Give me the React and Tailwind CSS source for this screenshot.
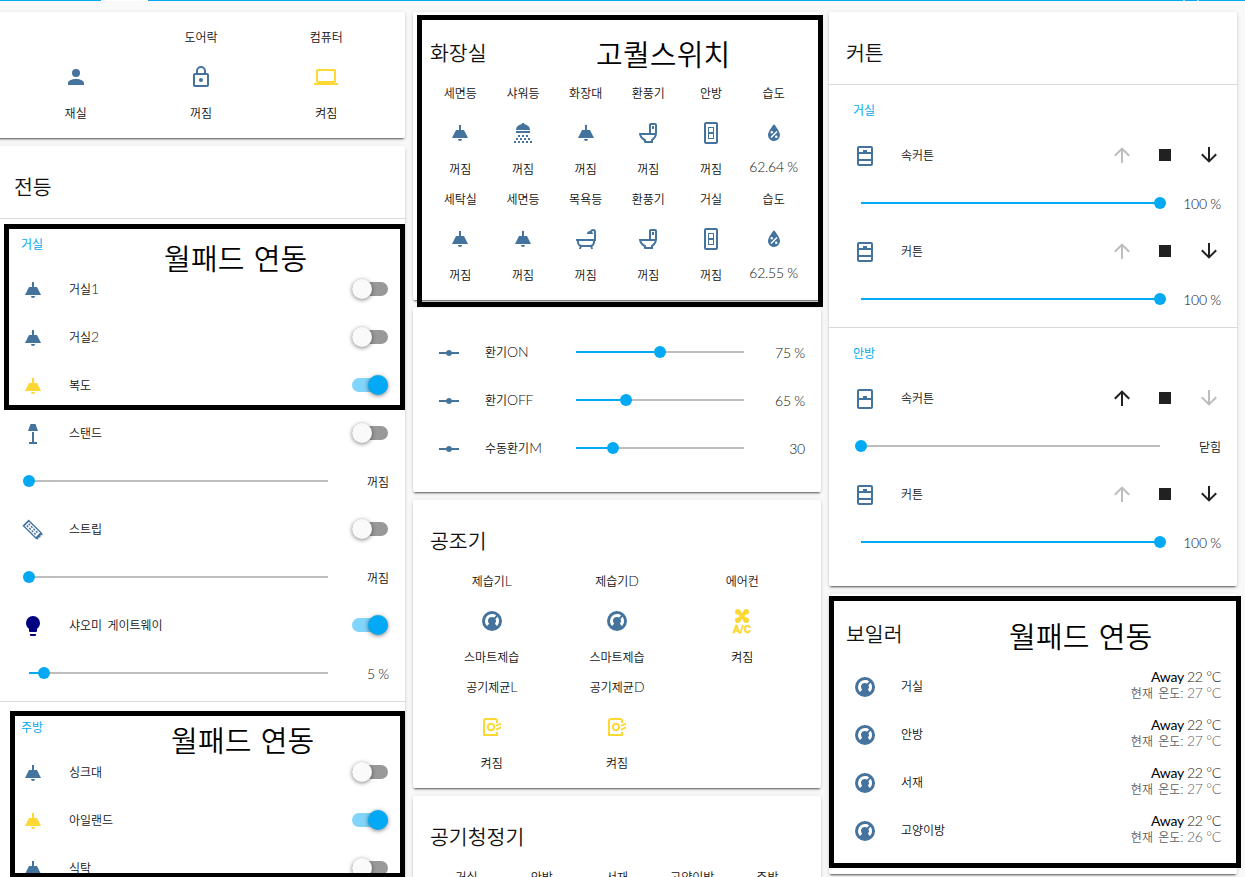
import React from "react";

const BLUE = "#44739e";
const YELLOW = "#fdd835";

const PATHS = {
  account:
    "M12,4A4,4 0 0,1 16,8A4,4 0 0,1 12,12A4,4 0 0,1 8,8A4,4 0 0,1 12,4M12,14C16.42,14 20,15.79 20,18V20H4V18C4,15.79 7.58,14 12,14Z",
  lock: "M12,17C10.89,17 10,16.1 10,15C10,13.89 10.89,13 12,13A2,2 0 0,1 14,15A2,2 0 0,1 12,17M18,20V10H6V20H18M18,8A2,2 0 0,1 20,10V20A2,2 0 0,1 18,22H6C4.89,22 4,21.1 4,20V10C4,8.89 4.89,8 6,8H7V6A5,5 0 0,1 12,1A5,5 0 0,1 17,6V8H18M12,3A3,3 0 0,0 9,6V8H15V6A3,3 0 0,0 12,3Z",
  laptop:
    "M4,6H20V16H4M20,18A2,2 0 0,0 22,16V6C22,4.89 21.1,4 20,4H4C2.89,4 2,4.89 2,6V16A2,2 0 0,0 4,18H0V20H24V18H20Z",
  lamp: "M8,9H11V4H13V9H16L20,17H4L8,9M14,18C14,19.1 13.1,20 12,20C10.9,20 10,19.1 10,18H14Z",
  stand: "M9.5,2H14.5L17,9H7ZM11,10H13V20H16V22H8V20H11Z",
  bulb: "M12,2A7,7 0 0,0 5,9C5,11.38 6.19,13.47 8,14.74V17A1,1 0 0,0 9,18H15A1,1 0 0,0 16,17V14.74C17.81,13.47 19,11.38 19,9A7,7 0 0,0 12,2M9,21A1,1 0 0,0 10,22H14A1,1 0 0,0 15,21V20H9V21Z",
  vertex:
    "M2,11H9.17C9.58,9.83 10.69,9 12,9C13.31,9 14.42,9.83 14.83,11H22V13H14.83C14.42,14.17 13.31,15 12,15C10.69,15 9.58,14.17 9.17,13H2V11Z",
  shower:
    "M5,9A7,6 0 0,1 11,3.1V2H13V3.1A7,6 0 0,1 19,9ZM5,10H19V12H5ZM7,14h2v2h-2zM11,14h2v2h-2zM15,14h2v2h-2zM5,17h2v2h-2zM9,17h2v2h-2zM13,17h2v2h-2zM17,17h2v2h-2zM3,20h2v2h-2zM7,20h2v2h-2zM11,20h2v2h-2zM15,20h2v2h-2zM19,20h2v2h-2z",
  toilet:
    "M9,22H17V19.5C19.41,17.87 21,15.12 21,12V4A2,2 0 0,0 19,2H15C13.89,2 13,2.9 13,4V12H3C3,15.09 4.57,18 8,19.7V21A1,1 0 0,0 9,22M5.29,14H18.71C18.14,15.91 16.77,17.53 15,18.41V20H10V18.41C7.73,17.53 5.86,15.91 5.29,14M15,4H19V12H15ZM16,5V8H18V5H16Z",
  switch:
    "M7,1H17A2,2 0 0,1 19,3V21A2,2 0 0,1 17,23H7A2,2 0 0,1 5,21V3A2,2 0 0,1 7,1M7,3V21H17V3ZM9,6H15V18H9ZM10,7V11H14V7ZM10,13V17H14V13Z",
  water:
    "M12,3.25C12,3.25 6,10 6,14C6,17.32 8.69,20 12,20A6,6 0 0,0 18,14C18,10 12,3.25 12,3.25M14.47,9.97L15.53,11.03L9.53,17.03L8.47,15.97ZM9.75,10A1.25,1.25 0 0,1 11,11.25A1.25,1.25 0 0,1 9.75,12.5A1.25,1.25 0 0,1 8.5,11.25A1.25,1.25 0 0,1 9.75,10M14.25,14.5A1.25,1.25 0 0,1 15.5,15.75A1.25,1.25 0 0,1 14.25,17A1.25,1.25 0 0,1 13,15.75A1.25,1.25 0 0,1 14.25,14.5Z",
  bath: "M21,14V15C21,16.91 19.93,18.57 18.35,19.41L19,22H17L16.5,20H7.5L7,22H5L5.65,19.41C4.07,18.57 3,16.91 3,15V14H2V12H20V5A1,1 0 0,0 19,4C18.5,4 18.12,4.34 18,4.79C18.63,5.33 19,6.13 19,7H13A3,3 0 0,1 16,4H16.17C16.58,2.84 17.69,2 19,2A3,3 0 0,1 22,5V14H21M19,14H5V15A3,3 0 0,0 8,18H16A3,3 0 0,0 19,15V14Z",
  gauge:
    "M16.95,16.95L14.83,14.83C15.55,14.1 16,13.1 16,12C16,11.26 15.79,10.57 15.43,10L17.6,7.81C18.5,9 19,10.43 19,12C19,13.93 18.22,15.68 16.95,16.95M12,5C13.57,5 15,5.5 16.19,6.4L14,8.56C13.43,8.21 12.74,8 12,8A4,4 0 0,0 8,12C8,13.1 8.45,14.1 9.17,14.83L7.05,16.95C5.78,15.68 5,13.93 5,12A7,7 0 0,1 12,5M12,2A10,10 0 0,0 2,12A10,10 0 0,0 12,22A10,10 0 0,0 22,12A10,10 0 0,0 12,2Z",
  opened:
    "M6,2H18A2,2 0 0,1 20,4V20A2,2 0 0,1 18,22H6A2,2 0 0,1 4,20V4A2,2 0 0,1 6,2M6,4V8H10V6H14V8H18V4ZM6,10V15H18V10ZM6,17V20H18V17Z",
  closed:
    "M6,2H18A2,2 0 0,1 20,4V20A2,2 0 0,1 18,22H6A2,2 0 0,1 4,20V4A2,2 0 0,1 6,2M6,4V11H10V9H14V11H18V4ZM6,13V20H18V13Z",
  up: "M13,20H11V8L5.5,13.5L4.08,12.08L12,4.16L19.92,12.08L18.5,13.5L13,8V20Z",
  down: "M11,4H13V16L18.5,10.5L19.92,11.92L12,19.84L4.08,11.92L5.5,10.5L11,16V4Z",
  stop: "M18,18H6V6H18V18Z",
};

function Icon({ name, color = BLUE }) {
  let body;
  if (name === "strip") {
    body = (
      <g transform="rotate(45 12 12)">
        <path
          fillRule="evenodd"
          d="M1.5,7.6H20.5L22.5,9L21,10.5L22.5,12L21,13.5L22.5,15L20.5,16.4H1.5ZM3.2,9V15H19V9Z"
        />
        <path d="M4.5,10h2v1.5h-2zM8,10h2v1.5h-2zM11.5,10h2v1.5h-2zM15,10h2v1.5h-2zM4.5,12.5h2v1.5h-2zM8,12.5h2v1.5h-2zM11.5,12.5h2v1.5h-2zM15,12.5h2v1.5h-2z" />
      </g>
    );
  } else if (name === "ac") {
    body = (
      <>
        <path d="M8.5,3L15.5,11M15.5,3L8.5,11" stroke={color} strokeWidth="3.8" />
        <circle cx="7.8" cy="2.8" r="2.8" />
        <circle cx="16.2" cy="2.8" r="2.8" />
        <circle cx="7.8" cy="11.2" r="2.8" />
        <circle cx="16.2" cy="11.2" r="2.8" />
        <text
          x="3"
          y="24"
          textLength="18"
          lengthAdjust="spacingAndGlyphs"
          stroke={color}
          strokeWidth="0.5"
          className="font-['Roboto','Liberation_Sans',sans-serif] text-[10.5px] font-bold"
        >
          A/C
        </text>
      </>
    );
  } else if (name === "purifier") {
    body = (
      <g fill="none" stroke={color} strokeWidth="2">
        <path d="M17,8V6A2,2 0 0,0 15,4H6A2,2 0 0,0 4,6V20H17V17" />
        <circle cx="11" cy="12" r="3.2" />
        <path d="M16,10.8L21,8.6M16,14.6L21,12.4" strokeWidth="1.7" />
      </g>
    );
  } else {
    body = <path fillRule="evenodd" d={PATHS[name]} />;
  }
  return (
    <svg viewBox="0 0 24 24" fill={color} className="size-6 shrink-0 overflow-visible">
      {body}
    </svg>
  );
}

/* Hangul is set smaller than the Latin letters and digits around it. */
function Label({ children, className = "" }) {
  const parts = children.match(/[\uac00-\ud7a3]+( [\uac00-\ud7a3]+)*|[^\uac00-\ud7a3]+/g) || [];
  return (
    <span className={"whitespace-pre " + className}>
      {parts.map((p, i) =>
        /[\uac00-\ud7a3]/.test(p) ? (
          <span key={i} className="text-[12px] [word-spacing:2px]">
            {p}
          </span>
        ) : (
          <span key={i} className="text-[14px] tracking-[-0.25px]">
            {p}
          </span>
        )
      )}
    </span>
  );
}

function Card({ className = "", children }) {
  return (
    <section
      className={
        "shrink-0 rounded-[2px] bg-white shadow-[0_2px_2px_0_rgba(0,0,0,0.16),0_1px_5px_0_rgba(0,0,0,0.12),0_3px_1px_-2px_rgba(0,0,0,0.35)] " +
        className
      }
    >
      {children}
    </section>
  );
}

function Title({ className = "h-[71px] pt-[11px]", children }) {
  return (
    <h2
      className={
        "flex items-center pl-[17px] text-[20.5px] leading-none font-[350] " + className
      }
    >
      {children}
    </h2>
  );
}

function Glance({ items, cols }) {
  return (
    <div className={"grid px-4 " + cols}>
      {items.map(([label, icon, state, color], i) => (
        <div key={i} className="flex h-[106px] flex-col items-center">
          <div className="flex h-5 items-center pb-[3px] leading-none">
            <Label>{label}</Label>
          </div>
          <div className="flex h-[60px] items-center">
            {icon && <Icon name={icon} color={color} />}
          </div>
          <div
            className={
              "flex h-[13px] items-center leading-none " +
              (/\d/.test(state) ? "pb-[7px]" : "pb-[3px]")
            }
          >
            <Label>{state}</Label>
          </div>
        </div>
      ))}
    </div>
  );
}

function Row({ icon, color, label, children }) {
  return (
    <div className="flex h-12 items-center pr-4 pl-6">
      <div className="w-12 shrink-0 pt-0.5">
        <Icon name={icon} color={color} />
      </div>
      <Label className="flex-1 pb-[3px] leading-none">{label}</Label>
      {children}
    </div>
  );
}

function Toggle({ on }) {
  return (
    <div
      className={
        "mr-px flex h-3.5 w-9 items-center rounded-full " +
        (on ? "justify-end bg-[#81d4fa]" : "bg-[#999999]")
      }
    >
      <div
        className={
          "size-5 shrink-0 rounded-full shadow-[0_1px_4px_0_rgba(0,0,0,0.5)] " +
          (on ? "bg-[#03a9f4]" : "bg-[#fafafa]")
        }
      />
    </div>
  );
}

function Slider({ value, className = "" }) {
  return (
    <div className={"flex items-center " + className}>
      <div className="h-0.5 bg-[#03a9f4]" style={{ width: `${value}%` }} />
      <div className="z-10 -mx-1.5 size-3 shrink-0 rounded-full bg-[#03a9f4]" />
      <div className="h-0.5 flex-1 bg-[#bdbdbd]" />
    </div>
  );
}

function SliderRow({ value, text }) {
  return (
    <div className="flex h-12 items-center justify-between pr-4 pl-8">
      <Slider value={value} className="w-[299px]" />
      <Label className="pb-px leading-none">{text}</Label>
    </div>
  );
}

function Section({ children }) {
  return (
    <div className="flex h-[46px] items-center pt-1.5 pl-6 text-[12px] leading-none font-normal text-[#03a9f4]">
      {children}
    </div>
  );
}

function Divider() {
  return <div className="h-px bg-[#dadada]" />;
}

function Cover({ label, closed }) {
  return (
    <Row icon={closed ? "closed" : "opened"} label={label}>
      <div className="flex">
        <Icon name="up" color={closed ? "#212121" : "#bdbdbd"} />
        <div className="mr-5 ml-[19px] flex">
          <Icon name="stop" color="#212121" />
        </div>
        <Icon name="down" color={closed ? "#bdbdbd" : "#212121"} />
      </div>
    </Row>
  );
}

function Climate({ label, now }) {
  return (
    <Row icon="gauge" label={label}>
      <div className="flex flex-col items-end pb-0.5 leading-4">
        <div className="flex h-4 items-center gap-[3px] text-[14px] tracking-[-0.25px]">
          <span className="font-normal text-black">Away</span>
          <span>22 °C</span>
        </div>
        <div className="flex h-4 items-center text-[#606060]">
          <Label>{`현재 온도: ${now} °C`}</Label>
        </div>
      </div>
    </Row>
  );
}

function Frame({ box, note, children }) {
  return (
    <div className={"absolute z-20 border-5 border-black " + box}>
      <div
        className={
          "absolute text-[29px] leading-none font-[350] tracking-[0.2px] whitespace-nowrap text-black [word-spacing:1px] " +
          note
        }
      >
        {children}
      </div>
    </div>
  );
}

const OFF = "꺼짐";
const ON = "켜짐";

export default function App() {
  return (
    <div className="relative h-[877px] w-[1245px] overflow-hidden bg-[#f9f9f9] font-['Lato','Noto_Sans_CJK_KR',sans-serif] font-[350] text-[#111111]">
      <header className="flex h-px bg-[#03a9f4]">
        <div className="ml-[101px] h-px w-[47px] bg-white" />
        <div className="ml-[1035px] h-px w-0.5 bg-[#a5d8f0]" />
        <div className="ml-3 h-px w-0.5 bg-[#a5d8f0]" />
      </header>

      <main className="-ml-[3px] flex gap-2 pt-[11px]">
        <div className="flex w-[408px] shrink-0 flex-col gap-2">
          <Card className="h-[126px] pt-[15px]">
            <Glance
              cols="grid-cols-3"
              items={[
                [" ", "account", "재실"],
                ["도어락", "lock", OFF],
                ["컴퓨터", "laptop", ON, YELLOW],
              ]}
            />
          </Card>
          <Card className="h-[760px]">
            <Title className="h-[72px] pt-2.5">전등</Title>
            <Divider />
            <Section>거실</Section>
            <Row icon="lamp" label="거실1">
              <Toggle />
            </Row>
            <Row icon="lamp" label="거실2">
              <Toggle />
            </Row>
            <Row icon="lamp" color={YELLOW} label="복도">
              <Toggle on />
            </Row>
            <Row icon="stand" label="스탠드">
              <Toggle />
            </Row>
            <SliderRow value={0} text={OFF} />
            <Row icon="strip" label="스트립">
              <Toggle />
            </Row>
            <SliderRow value={0} text={OFF} />
            <Row icon="bulb" color="#000080" label="샤오미 게이트웨이">
              <Toggle on />
            </Row>
            <SliderRow value={5} text="5 %" />
            <div className="h-1" />
            <Divider />
            <Section>주방</Section>
            <Row icon="lamp" label="싱크대">
              <Toggle />
            </Row>
            <Row icon="lamp" color={YELLOW} label="아일랜드">
              <Toggle on />
            </Row>
            <Row icon="lamp" label="식탁">
              <Toggle />
            </Row>
          </Card>
        </div>

        <div className="flex w-[408px] shrink-0 flex-col gap-2">
          <Card className="h-[288px]">
            <Title>화장실</Title>
            <Glance
              cols="grid-cols-6"
              items={[
                ["세면등", "lamp", OFF],
                ["샤워등", "shower", OFF],
                ["화장대", "lamp", OFF],
                ["환풍기", "toilet", OFF],
                ["안방", "switch", OFF],
                ["습도", "water", "62.64 %"],
                ["세탁실", "lamp", OFF],
                ["세면등", "lamp", OFF],
                ["목욕등", "bath", OFF],
                ["환풍기", "toilet", OFF],
                ["거실", "switch", OFF],
                ["습도", "water", "62.55 %"],
              ]}
            />
          </Card>
          <Card className="h-[184px] pt-5">
            <Row icon="vertex" label="환기ON">
              <Slider value={50} className="w-[168px]" />
              <Label className="w-[61px] text-right">75 %</Label>
            </Row>
            <Row icon="vertex" label="환기OFF">
              <Slider value={30} className="w-[168px]" />
              <Label className="w-[61px] text-right">65 %</Label>
            </Row>
            <Row icon="vertex" label="수동환기M">
              <Slider value={22} className="w-[168px]" />
              <Label className="w-[61px] text-right">30</Label>
            </Row>
          </Card>
          <Card className="h-[288px]">
            <Title>공조기</Title>
            <Glance
              cols="grid-cols-3"
              items={[
                ["제습기L", "gauge", "스마트제습"],
                ["제습기D", "gauge", "스마트제습"],
                ["에어컨", "ac", ON, YELLOW],
                ["공기제균L", "purifier", ON, YELLOW],
                ["공기제균D", "purifier", ON, YELLOW],
              ]}
            />
          </Card>
          <Card className="h-[288px]">
            <Title>공기청정기</Title>
            <Glance
              cols="grid-cols-5"
              items={[
                ["거실", "", ""],
                ["안방", "", ""],
                ["서재", "", ""],
                ["고양이방", "", ""],
                ["주방", "", ""],
              ]}
            />
          </Card>
        </div>

        <div className="flex w-[408px] shrink-0 flex-col gap-2">
          <Card className="h-[574px]">
            <Title className="h-[72px] pt-2.5">커튼</Title>
            <Divider />
            <Section>거실</Section>
            <Cover label="속커튼" />
            <SliderRow value={100} text="100 %" />
            <Cover label="커튼" />
            <SliderRow value={100} text="100 %" />
            <div className="h-1" />
            <Divider />
            <Section>안방</Section>
            <Cover label="속커튼" closed />
            <SliderRow value={0} text="닫힘" />
            <Cover label="커튼" />
            <SliderRow value={100} text="100 %" />
          </Card>
          <Card className="h-[280px]">
            <Title className="h-[68px] pt-3">보일러</Title>
            <Climate label="거실" now={27} />
            <Climate label="안방" now={27} />
            <Climate label="서재" now={27} />
            <Climate label="고양이방" now={26} />
          </Card>
        </div>
      </main>

      <Frame box="left-1 top-[224px] h-[186px] w-[401px]" note="left-[155px] top-[15px]">
        월패드 연동
      </Frame>
      <Frame box="left-[10px] top-[711px] h-[167px] w-[395px]" note="left-[156px] top-[10px]">
        월패드 연동
      </Frame>
      <Frame box="left-[417px] top-[15px] h-[292px] w-[406px]" note="left-[174px] top-[20px]">
        고퀄스위치
      </Frame>
      <Frame box="left-[829px] top-[596px] h-[272px] w-[412px]" note="left-[175px] top-[21px]">
        월패드 연동
      </Frame>
    </div>
  );
}
